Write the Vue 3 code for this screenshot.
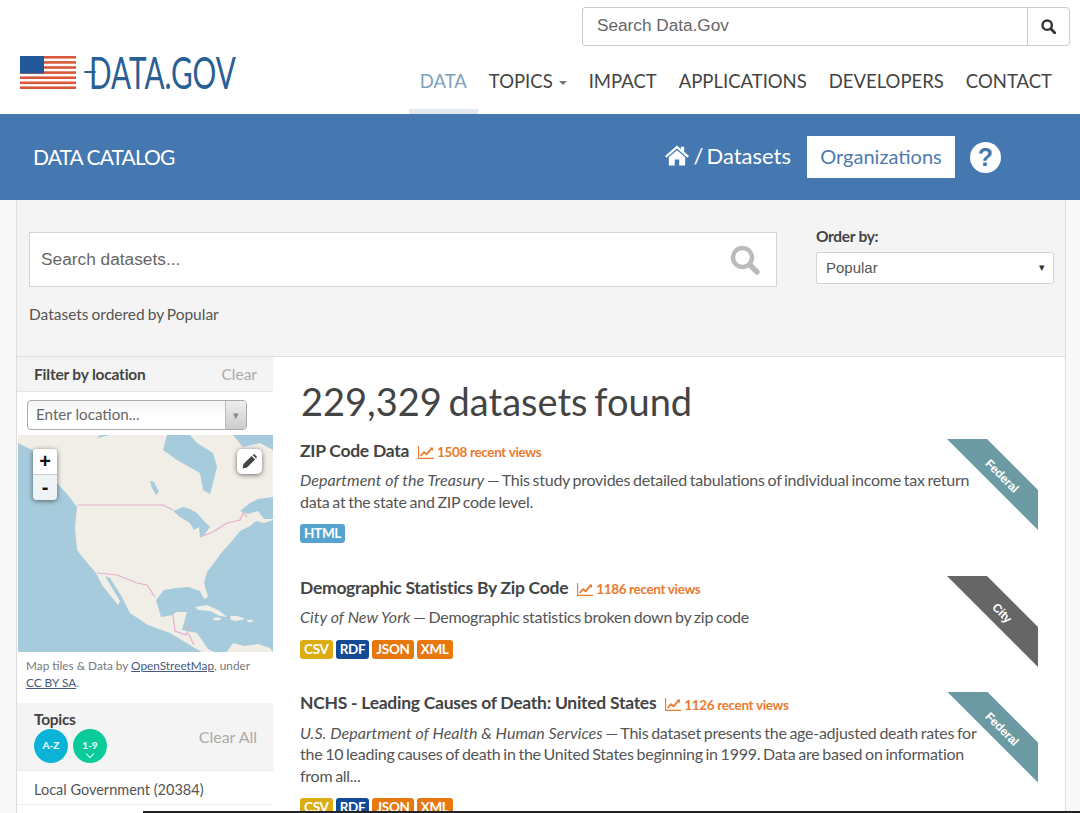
<script setup>
import { ref } from 'vue'

const navItems = ['DATA', 'TOPICS', 'IMPACT', 'APPLICATIONS', 'DEVELOPERS', 'CONTACT']

const datasets = ref([
  {
    title: 'ZIP Code Data',
    views: 1508,
    org: 'Department of the Treasury',
    text: 'This study provides detailed tabulations of individual income tax return data at the state and ZIP code level.',
    formats: ['HTML'],
    level: 'Federal'
  },
  {
    title: 'Demographic Statistics By Zip Code',
    views: 1186,
    org: 'City of New York',
    text: 'Demographic statistics broken down by zip code',
    formats: ['CSV', 'RDF', 'JSON', 'XML'],
    level: 'City'
  },
  {
    title: 'NCHS - Leading Causes of Death: United States',
    views: 1126,
    org: 'U.S. Department of Health & Human Services',
    text: 'This dataset presents the age-adjusted death rates for the 10 leading causes of death in the United States beginning in 1999. Data are based on information from all...',
    formats: ['CSV', 'RDF', 'JSON', 'XML'],
    level: 'Federal'
  }
])
</script>

<template>
  <div class="page">
    <!-- top header -->
    <header class="header">
      <div class="logo">
        <svg class="flag" width="56" height="33" viewBox="0 0 56 33">
          <rect width="56" height="33" fill="#fff" />
          <rect y="0" width="56" height="2.6" fill="#d9583b" />
          <rect y="5.1" width="56" height="2.6" fill="#d9583b" />
          <rect y="10.2" width="56" height="2.6" fill="#d9583b" />
          <rect y="15.3" width="56" height="2.6" fill="#d9583b" />
          <rect y="20.4" width="56" height="2.6" fill="#d9583b" />
          <rect y="25.5" width="56" height="2.6" fill="#d9583b" />
          <rect y="30.4" width="56" height="2.6" fill="#d9583b" />
          <rect width="24" height="17.5" fill="#22599b" />
        </svg>
        <span class="logo-text">DATA.GOV</span>
      </div>
      <div class="header-right">
        <div class="top-search">
          <span class="top-search-text">Search Data.Gov</span>
          <span class="top-search-btn">
            <svg width="15" height="15" viewBox="0 0 16 16">
              <circle cx="6.6" cy="6.6" r="5" fill="none" stroke="#333" stroke-width="2.6" />
              <line x1="10.4" y1="10.4" x2="14.6" y2="14.6" stroke="#333" stroke-width="3" stroke-linecap="round" />
            </svg>
          </span>
        </div>
        <nav class="nav">
          <a v-for="(item, i) in navItems" :key="item" class="nav-item" :class="{ active: i === 0 }">
            {{ item }}<span v-if="item === 'TOPICS'" class="caret"></span>
          </a>
        </nav>
      </div>
    </header>

    <!-- blue band -->
    <div class="band">
      <div class="band-title">DATA CATALOG</div>
      <div class="band-right">
        <svg class="home" width="24" height="21" viewBox="0 0 25 21">
          <path fill="#fff" d="M12.5 0 L16.6 3.6 V1.4 H20 V6.6 L25 11 L23.4 12.8 L12.5 3.3 L1.6 12.8 L0 11 Z" />
          <path fill="#fff" d="M12.5 5 L21 12.4 V21 H14.8 V14.6 H10.2 V21 H4 V12.4 Z" />
        </svg>
        <span class="crumb">/ Datasets</span>
        <span class="org-btn">Organizations</span>
        <span class="help">?</span>
      </div>
    </div>

    <div class="container">
      <!-- search panel -->
      <section class="search-panel">
        <div class="search-left">
          <div class="search-box">
            <span>Search datasets...</span>
            <svg width="30" height="30" viewBox="0 0 30 30">
              <circle cx="12.5" cy="12.5" r="9.5" fill="none" stroke="#bbb" stroke-width="4.4" />
              <line x1="20" y1="20" x2="27" y2="27" stroke="#bbb" stroke-width="5.4" stroke-linecap="round" />
            </svg>
          </div>
          <p class="ordered">Datasets ordered by Popular</p>
        </div>
        <div class="order">
          <label>Order by:</label>
          <div class="order-select">
            <span>Popular</span>
            <span class="order-arrow">▾</span>
          </div>
        </div>
      </section>

      <div class="columns">
        <!-- sidebar -->
        <aside class="sidebar">
          <div class="filter-head">
            <strong>Filter by location</strong>
            <span class="clear">Clear</span>
          </div>
          <div class="location-wrap">
            <div class="location">
              <span class="location-text">Enter location...</span>
              <span class="location-arrow">▾</span>
            </div>
          </div>

          <div class="map">
            <svg width="255" height="217" viewBox="0 0 255 217">
              <rect width="255" height="217" fill="#a6cbdc" />
              <path fill="#f1eee8" d="M0 0 L255 0 L255 85 L246 88 L238 86 L232 91 L222 96 L214 106 L204 117 L196 128 L189 137 L186 148 L190 162 L186 164 L182 156 L170 152 L158 153 L146 155 L138 165 L143 182 L155 180 L158 177 L169 177 L164 195 L179 198 L190 214 L196 217 L184 217 L175 212 L152 198 L130 190 L112 178 L104 162 L92 143 L87 141 L102 166 L100 170 L84 150 L78 138 L66 124 L59 115 L57 92 L59 72 L50 60 L39 48 L30 36 L14 15 L0 8 Z" />
              <path fill="#f1eee8" d="M209 217 L215 208 L226 211 L240 209 L252 213 L255 217 Z" />
              <path fill="#a6cbdc" d="M149 0 L145 15 L159 25 L182 38 L185 55 L192 59 L195 48 L199 32 L195 18 L179 8 L172 0 Z" />
              <path fill="#a6cbdc" d="M215 0 L225 12 L242 8 L255 15 L255 0 Z" />
              <path fill="#a6cbdc" d="M79 3 L92 0 L82 0 Z" />
              <path fill="#a6cbdc" d="M132 46 L136 47 L141 57 L138 60 L134 53 Z" />
              <path fill="#a6cbdc" d="M155 76 L165 72 L172 74 L179 78 L185 85 L192 92 L186 100 L182 102 L181 92 L176 95 L172 88 L162 82 Z" />
              <path fill="#a6cbdc" d="M222 76 L232 68 L240 64 L255 62 L255 84 L246 84 L240 76 L230 79 Z" />
              <path fill="#f1eee8" d="M177 172 L189 170 L200 175 L209 182 L202 181 L192 176 L180 175 Z" />
              <path fill="#f1eee8" d="M212 181 L220 181 L227 184 L218 186 L213 185 Z" />
              <ellipse cx="199" cy="184" rx="4" ry="1.4" fill="#f1eee8" />
              <ellipse cx="232" cy="186" rx="3" ry="1.2" fill="#f1eee8" />
              <g fill="none" stroke="#e3afc8" stroke-width="1.2">
                <path d="M60 70 H145 L155 75" />
                <path d="M182 102 L195 97 L209 88 L222 85 L225 78 L229 82" />
                <path d="M79 138 L99 140 L119 148 L129 150 L137 162" />
                <path d="M155 180 L157 196 L168 200 L172 190 M170 198 L176 210" />
              </g>
            </svg>
            <div class="zoom-ctl">
              <span class="zoom-btn">+</span>
              <span class="zoom-btn minus">-</span>
            </div>
            <div class="edit-btn">
              <svg width="15" height="15" viewBox="0 0 15 15">
                <path fill="#444" d="M0.5 14.5 L1.5 10 L9.6 1.9 L13.1 5.4 L5 13.5 Z M10.6 0.9 L11.4 0.3 Q12 0 12.6 0.4 L14.6 2.4 Q15 3 14.7 3.6 L14.1 4.4 Z" />
              </svg>
            </div>
          </div>

          <p class="attribution">
            Map tiles &amp; Data by <a>OpenStreetMap</a>, under <a>CC BY SA</a>.
          </p>

          <div class="topics-head">
            <div>
              <div class="topics-title">Topics</div>
              <div class="sort-btns">
                <span class="sort az">A-Z</span>
                <span class="sort num">1-9<i></i></span>
              </div>
            </div>
            <span class="clear clear-all">Clear All</span>
          </div>
          <div class="topic-row">Local Government (20384)</div>
          <div class="topic-row"></div>
        </aside>

        <!-- results -->
        <main class="results">
          <h1>229,329 datasets found</h1>
          <article v-for="d in datasets" :key="d.title" class="dataset">
            <div class="ribbon" :class="d.level.toLowerCase()">
              <span>{{ d.level }}</span>
            </div>
            <div class="dataset-title">
              <h3>{{ d.title }}</h3>
              <span class="views">
                <svg width="16" height="13" viewBox="0 0 16 13">
                  <path fill="none" stroke="#ea7a30" stroke-width="1.1" d="M0.6 0 V12.4 H16" />
                  <path fill="none" stroke="#ea7a30" stroke-width="1.8" d="M2.6 10 L6 6.2 L8.6 8.2 L13.4 2.8" />
                  <path fill="#ea7a30" d="M11.4 1.6 H15 V5.2 Z" />
                </svg>
                {{ d.views }} recent views
              </span>
            </div>
            <p class="desc"><em>{{ d.org }}</em> — {{ d.text }}</p>
            <div class="badges">
              <span v-for="f in d.formats" :key="f" class="badge" :class="f.toLowerCase()">{{ f }}</span>
            </div>
          </article>
        </main>
      </div>
    </div>

    <div class="bottom-line"></div>
  </div>
</template>

<style scoped>
.page {
  position: relative;
  height: 813px;
  overflow: hidden;
  font-family: Lato, "Open Sans", sans-serif;
  color: #444;
  background: #f8f8f8;
}

.header {
  display: flex;
  justify-content: space-between;
  height: 114px;
  background: #fff;
}

.logo {
  display: flex;
  align-items: center;
  gap: 9px;
  margin: 56px 0 0 20px;
  height: 33px;
}

.logo-text {
  position: relative;
  display: inline-block;
  margin-left: 4px;
  font-size: 45px;
  font-weight: 400;
  line-height: 33px;
  color: #2a5f94;
  transform: scaleX(0.66);
  transform-origin: left center;
  white-space: nowrap;
}

.logo-text::before {
  content: "";
  position: absolute;
  left: -7px;
  top: 15px;
  width: 17px;
  height: 2px;
  background: #2a5f94;
}

.header-right {
  display: flex;
  flex-direction: column;
  align-items: flex-end;
}

.top-search {
  display: flex;
  justify-content: space-between;
  width: 488px;
  height: 39px;
  box-sizing: border-box;
  margin: 7px 10px 0 0;
  border: 1px solid #ccc;
  border-radius: 3px 4px 4px 3px;
  font-family: "Liberation Sans", Arial, sans-serif;
}

.top-search-text {
  padding-left: 14px;
  font-size: 17.2px;
  line-height: 35px;
  color: #666;
}

.top-search-btn {
  display: flex;
  align-items: center;
  justify-content: center;
  width: 41px;
  border-left: 1px solid #ccc;
}

.nav {
  display: flex;
  margin: 5px 17px 0 0;
  height: 63px;
}

.nav-item {
  box-sizing: border-box;
  height: 63px;
  padding: 18px 11px 0;
  font-size: 18.5px;
  line-height: 24px;
  color: #444;
  white-space: nowrap;
}

.nav-item.active {
  color: #7fa0bd;
  border-bottom: 5px solid #e3e8ef;
}

.caret {
  display: inline-block;
  margin-left: 6px;
  vertical-align: middle;
  border-top: 4px solid #777;
  border-left: 4px solid transparent;
  border-right: 4px solid transparent;
}

.band {
  display: flex;
  justify-content: space-between;
  align-items: center;
  height: 86px;
  padding: 0 79px 0 33px;
  background: #4577b0;
  color: #fff;
}

.band-title {
  margin-top: -2px;
  font-size: 21px;
  letter-spacing: -0.9px;
}

.band-right {
  display: flex;
  align-items: center;
}

.home {
  margin: -3px 4px 0 0;
}

.crumb {
  font-size: 22px;
  word-spacing: -2.5px;
  margin-top: -3px;
}

.org-btn {
  margin: 0 15px 0 16px;
  width: 148px;
  height: 42px;
  line-height: 41px;
  text-align: center;
  background: #fff;
  color: #4f7cad;
  font-size: 20px;
}

.help {
  width: 31px;
  height: 31px;
  border-radius: 50%;
  background: #fff;
  color: #4577b0;
  font-family: "Liberation Sans", Arial, sans-serif;
  font-size: 25px;
  font-weight: 700;
  line-height: 31px;
  text-align: center;
}

.container {
  margin: 0 14px 0 16px;
  border-left: 1px solid #ddd;
  border-right: 1px solid #ddd;
}

.search-panel {
  display: flex;
  justify-content: space-between;
  height: 157px;
  box-sizing: border-box;
  padding: 32px 11px 0 12px;
  background: #f4f4f4;
  border-bottom: 1px solid #ddd;
}

.search-left {
  width: 748px;
}

.search-box {
  display: flex;
  justify-content: space-between;
  align-items: center;
  height: 55px;
  box-sizing: border-box;
  padding: 0 16px 0 11px;
  background: #fff;
  border: 1px solid #d4d4d4;
  font-family: "Liberation Sans", Arial, sans-serif;
  font-size: 17.3px;
  color: #666;
}

.ordered {
  margin: 17px 0 0;
  font-size: 15.5px;
  word-spacing: -1px;
  line-height: 20px;
  color: #555;
}

.order {
  width: 238px;
}

.order label {
  display: block;
  font-size: 15.5px;
  font-weight: 700;
  letter-spacing: -0.3px;
  line-height: 20px;
  color: #444;
  margin-top: -6px;
}

.order-select {
  display: flex;
  justify-content: space-between;
  align-items: center;
  height: 32px;
  box-sizing: border-box;
  margin-top: 6px;
  padding: 0 8px 2px 9px;
  background: #fff;
  border: 1px solid #d4d4d4;
  border-radius: 2px;
  font-family: "Liberation Sans", Arial, sans-serif;
  font-size: 15px;
  color: #555;
}

.order-arrow {
  font-size: 11px;
  color: #333;
}

.columns {
  display: flex;
  background: #fff;
}

.sidebar {
  flex: 0 0 256px;
  width: 256px;
}

.filter-head {
  display: flex;
  justify-content: space-between;
  align-items: center;
  height: 35px;
  box-sizing: border-box;
  padding: 0 16px 0 17px;
  background: #f4f4f4;
  border-bottom: 1px solid #e4e4e4;
}

.filter-head strong {
  font-size: 15.5px;
  font-weight: 700;
  letter-spacing: -0.2px;
  color: #444;
}

.clear {
  font-size: 15.5px;
  color: #aaa;
}

.location-wrap {
  height: 43px;
  box-sizing: border-box;
  padding: 8px 0 0 10px;
}

.location {
  display: flex;
  justify-content: space-between;
  align-items: stretch;
  width: 220px;
  height: 30px;
  box-sizing: border-box;
  border: 1px solid #aaa;
  border-radius: 4px;
  background: linear-gradient(#f4f4f4, #fff 60%);
}

.location-text {
  padding-left: 8px;
  font-size: 15.2px;
  line-height: 26px;
  color: #666;
}

.location-arrow {
  width: 20px;
  border-left: 1px solid #bbb;
  border-radius: 0 3px 3px 0;
  background: linear-gradient(#eee, #ccc);
  font-size: 11px;
  line-height: 28px;
  text-align: center;
  color: #888;
}

.map {
  position: relative;
  height: 217px;
  margin-left: 1px;
}

.map svg {
  display: block;
}

.zoom-ctl {
  position: absolute;
  left: 15px;
  top: 14px;
  width: 24px;
  border-radius: 4px;
  box-shadow: 0 1px 5px rgba(0, 0, 0, 0.55);
  overflow: hidden;
}

.zoom-btn {
  display: block;
  height: 25px;
  background: #fff;
  border-bottom: 1px solid #ccc;
  font-family: "Liberation Sans", Arial, sans-serif;
  font-size: 20px;
  font-weight: 700;
  line-height: 25px;
  text-align: center;
  color: #111;
}

.zoom-btn.minus {
  background: #eef3f6;
  border-bottom: 0;
}

.edit-btn {
  position: absolute;
  left: 219px;
  top: 14px;
  display: flex;
  align-items: center;
  justify-content: center;
  width: 25px;
  height: 25px;
  background: #fff;
  border-radius: 5px;
  box-shadow: 0 1px 5px rgba(0, 0, 0, 0.55);
}

.attribution {
  height: 51px;
  box-sizing: border-box;
  margin: 0;
  padding: 5px 12px 0 9px;
  font-size: 11.8px;
  line-height: 17px;
  color: #777;
}

.attribution a {
  color: #44597d;
  text-decoration: underline;
}

.topics-head {
  display: flex;
  justify-content: space-between;
  align-items: flex-start;
  height: 68px;
  box-sizing: border-box;
  padding: 7px 16px 0 17px;
  background: #f4f4f4;
  border-bottom: 1px solid #e8e8e8;
}

.topics-title {
  font-size: 15.5px;
  font-weight: 700;
  letter-spacing: -0.3px;
  line-height: 18px;
  color: #444;
}

.sort-btns {
  display: flex;
  gap: 5px;
  margin-top: 1px;
}

.sort {
  position: relative;
  width: 34px;
  height: 34px;
  border-radius: 50%;
  font-size: 10px;
  font-weight: 900;
  line-height: 32px;
  text-align: center;
  color: #e6fbff;
}

.sort.az {
  background: #0bb3d6;
}

.sort.num {
  background: #0ccb9a;
}

.sort i {
  position: absolute;
  left: 14px;
  top: 22px;
  width: 5px;
  height: 5px;
  border-right: 1px solid #dff;
  border-bottom: 1px solid #dff;
  transform: rotate(45deg);
}

.clear-all {
  align-self: center;
  font-size: 16px;
  margin-top: -8px;
}

.topic-row {
  height: 34px;
  box-sizing: border-box;
  padding-left: 17px;
  border-bottom: 1px solid #eee;
  font-size: 14.5px;
  line-height: 38px;
  color: #555;
}

.results {
  flex: 1;
  padding: 22px 27px 0 27px;
}

.results h1 {
  margin: 0 0 16px 1px;
  font-size: 38px;
  font-weight: 400;
  word-spacing: -3px;
  line-height: 44px;
  color: #444;
}

.dataset {
  position: relative;
  margin-bottom: 33px;
}

.dataset-title {
  display: flex;
  align-items: center;
  height: 24px;
}

.dataset-title h3 {
  margin: -2px 0 0;
  font-size: 17.5px;
  font-weight: 700;
  letter-spacing: -0.27px;
  color: #444;
}

.views {
  display: flex;
  align-items: center;
  gap: 3px;
  margin: 2px 0 0 9px;
  font-size: 13.5px;
  font-weight: 700;
  letter-spacing: -0.35px;
  color: #ea7a30;
}

.desc {
  width: 680px;
  margin: 6px 0 0;
  font-size: 16px;
  letter-spacing: -0.26px;
  word-spacing: -1px;
  line-height: 21.5px;
  color: #555;
}

.desc em {
  color: #555;
  letter-spacing: 0.05px;
  word-spacing: 0;
}

.badges {
  display: flex;
  gap: 3px;
  margin-top: 12px;
}

.badge {
  height: 19px;
  padding: 0 4px;
  border-radius: 3px;
  font-size: 13.5px;
  font-weight: 700;
  line-height: 19px;
  letter-spacing: -0.3px;
  color: #fff;
}

.badge.html { background: #57a3cf; }
.badge.csv { background: #dcac14; }
.badge.rdf { background: #124a96; }
.badge.json,
.badge.xml { background: #e8780e; }

.ribbon {
  position: absolute;
  top: 0;
  right: 0;
  width: 91px;
  height: 91px;
  clip-path: polygon(0 0, 40px 0, 91px 51px, 91px 91px);
  background: #6b9aa3;
  color: #fff;
}

.ribbon.city {
  background: #666;
}

.ribbon span {
  position: absolute;
  left: 55px;
  top: 37px;
  font-family: "Liberation Sans", Arial, sans-serif;
  font-size: 12px;
  font-weight: 700;
  letter-spacing: -0.2px;
  line-height: 16px;
  white-space: nowrap;
  transform: translate(-50%, -50%) rotate(45deg);
}

.bottom-line {
  position: absolute;
  left: 143px;
  right: 0;
  bottom: 0;
  height: 2px;
  background: #222;
}
</style>

<style>
body {
  background: #fff;
}
</style>
